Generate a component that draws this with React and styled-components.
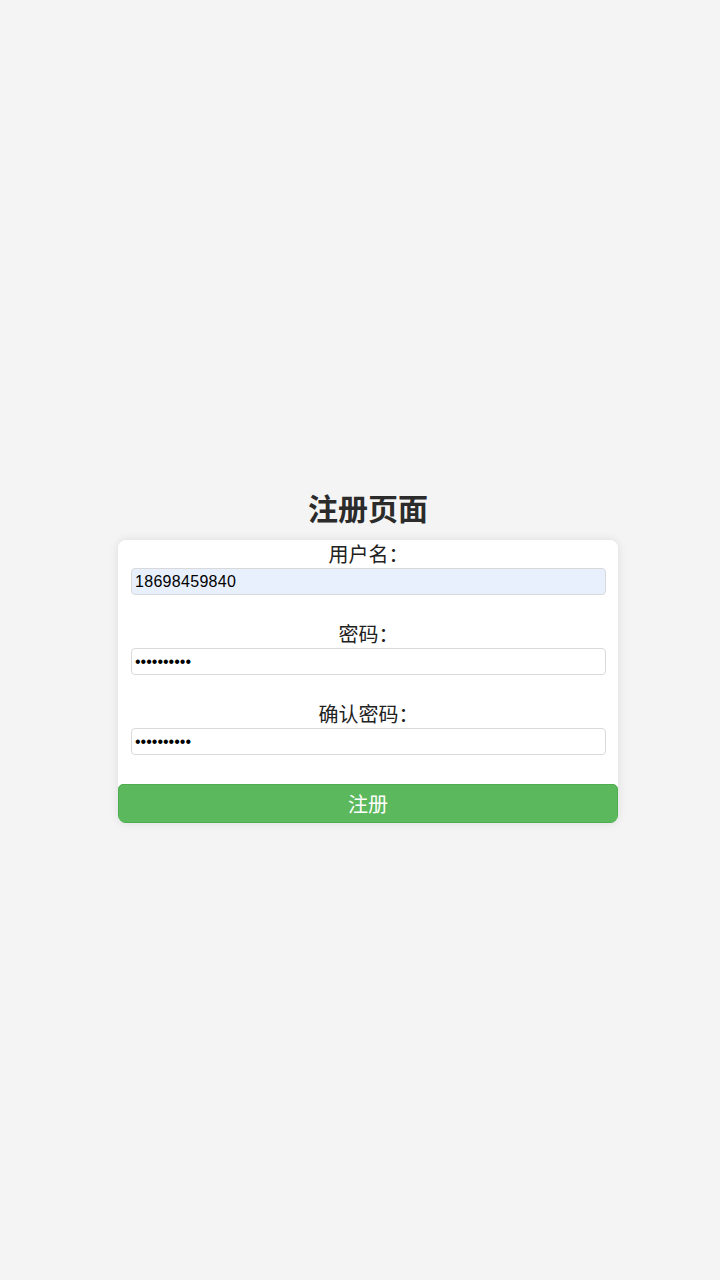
import React from "react";
import styled, { createGlobalStyle } from "styled-components";

const GlobalStyle = createGlobalStyle`
  html, body {
    margin: 0;
    padding: 0;
    background: #f4f4f4;
    font-family: "Liberation Sans", "Noto Sans CJK SC", sans-serif;
  }
`;

const Page = styled.div`
  box-sizing: border-box;
  min-height: 100vh;
  padding-left: 16px;
  display: flex;
  flex-direction: column;
  align-items: center;
  justify-content: center;
`;

const Title = styled.h2`
  margin: 31px 0 9px;
  font-family: "Liberation Sans", "Noto Sans CJK SC", sans-serif;
  font-size: 30px;
  line-height: 43px;
  font-weight: 700;
  color: #2b2b2b;
  text-align: center;
`;

const Card = styled.form`
  width: 500px;
  background: #ffffff;
  border-radius: 8px;
  box-shadow: 0 0 10px rgba(0, 0, 0, 0.1);
  display: flex;
  flex-direction: column;
  overflow: hidden;
`;

const Field = styled.div`
  display: flex;
  flex-direction: column;
  padding: 0 12px 0 13px;
  margin-bottom: 25px;
`;

const Label = styled.label`
  font-family: "Noto Sans CJK SC", sans-serif;
  font-size: 20px;
  line-height: 28px;
  color: #222;
  text-align: center;
`;

const Input = styled.input`
  box-sizing: border-box;
  width: 100%;
  height: 27px;
  padding: 0 3px;
  border: 1px solid #d9d9d9;
  border-radius: 4px;
  font-family: "Liberation Sans", Arial, sans-serif;
  font-size: 16px;
  letter-spacing: ${(p) => (p.$autofill ? "0.3px" : "0")};
  color: #000;
  background: ${(p) => (p.$autofill ? "#e8f0fe" : "#ffffff")};
  outline: none;
`;

const Button = styled.button`
  margin-top: 4px;
  height: 39px;
  width: 100%;
  border: 1px solid #4cae4c;
  border-radius: 5px;
  background: #5cb85c;
  color: #ffffff;
  font-family: "Noto Sans CJK SC", sans-serif;
  font-size: 20px;
  cursor: pointer;
`;

export default function App() {
  return (
    <>
      <GlobalStyle />
      <Page>
        <Title>注册页面</Title>
        <Card onSubmit={(e) => e.preventDefault()}>
          <Field>
            <Label htmlFor="username">用户名：</Label>
            <Input id="username" type="text" defaultValue="18698459840" $autofill />
          </Field>
          <Field>
            <Label htmlFor="password">密码：</Label>
            <Input id="password" type="password" defaultValue="1234567890" />
          </Field>
          <Field>
            <Label htmlFor="confirm">确认密码：</Label>
            <Input id="confirm" type="password" defaultValue="1234567890" />
          </Field>
          <Button type="submit">注册</Button>
        </Card>
      </Page>
    </>
  );
}
